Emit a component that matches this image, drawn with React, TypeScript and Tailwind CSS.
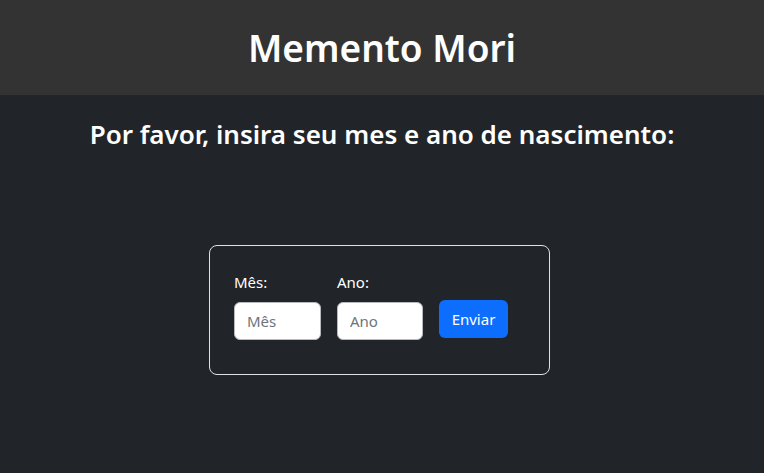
export default function App() {
  return (
    <div
      className="min-h-[473px] bg-[#212529] text-white"
      style={{ fontFamily: '"Noto Sans", "Open Sans", sans-serif' }}
    >
      <header className="flex h-[95px] items-center justify-center bg-[#333333]">
        <h1 className="text-[37px] font-semibold leading-none">Memento Mori</h1>
      </header>

      <h2 className="mt-[21px] text-center text-[26px] font-semibold leading-[36px]">
        Por favor, insira seu mes e ano de nascimento:
      </h2>

      <form className="ml-[209px] mt-[93px] w-[341px] rounded-lg border border-[#dee2e6] px-6 pb-[34px] pt-6">
        <div className="flex items-start gap-4">
          <div className="flex flex-col">
            <label htmlFor="mes" className="mb-2 text-[15px] leading-6">
              Mês:
            </label>
            <input
              id="mes"
              placeholder="Mês"
              className="h-[38px] w-[87px] rounded-md border border-[#b6b9bd] bg-white px-3 text-[15px] text-[#212529] placeholder:text-[#6c757d]"
            />
          </div>
          <div className="flex flex-col">
            <label htmlFor="ano" className="mb-2 text-[15px] leading-6">
              Ano:
            </label>
            <input
              id="ano"
              placeholder="Ano"
              className="h-[38px] w-[86px] rounded-md border border-[#b6b9bd] bg-white px-3 text-[15px] text-[#212529] placeholder:text-[#6c757d]"
            />
          </div>
          <button
            type="button"
            className="mt-[30px] h-[38px] w-[69px] rounded-md bg-[#0d6efd] text-[15px] text-white"
          >
            Enviar
          </button>
        </div>
      </form>
    </div>
  );
}
